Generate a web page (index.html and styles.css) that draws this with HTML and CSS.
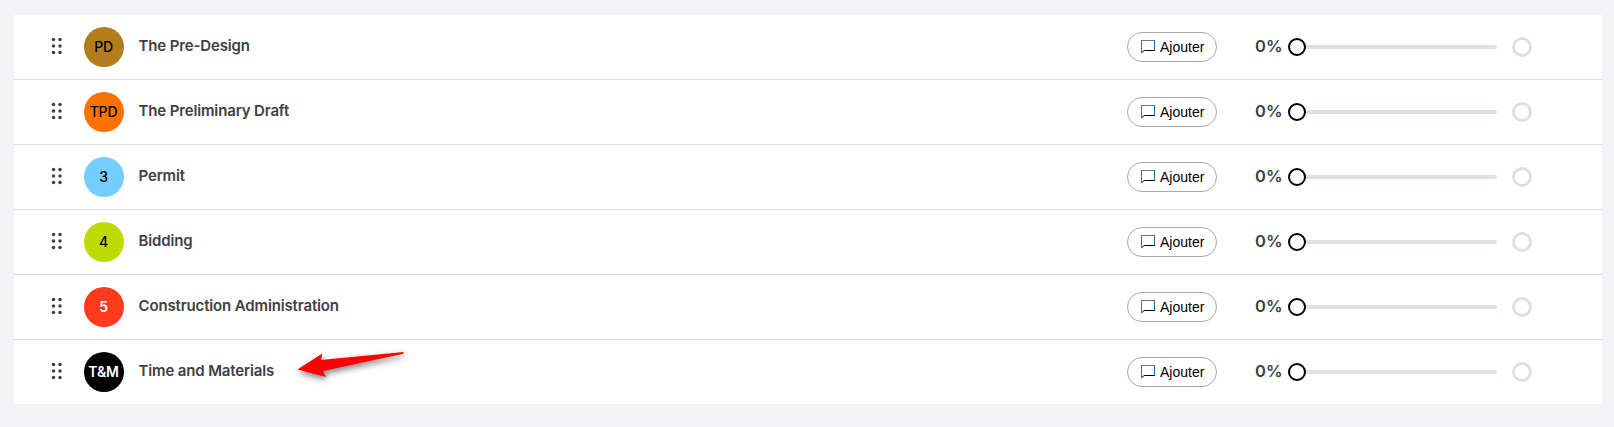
FILE: index.html
```html
<!DOCTYPE html>
<html lang="fr">

<head>
    <meta charset="UTF-8">
    <meta name="viewport" content="width=device-width, initial-scale=1.0">
    <title>Phases</title>
    <link rel="stylesheet" href="styles.css">
</head>

<body>
    <!-- Shared icons -->
    <svg class="sprite" width="0" height="0">
        <symbol id="grip" viewBox="0 0 12 18">
            <circle cx="2.5" cy="2.6" r="1.75" />
            <circle cx="9" cy="2.6" r="1.75" />
            <circle cx="2.5" cy="9" r="1.75" />
            <circle cx="9" cy="9" r="1.75" />
            <circle cx="2.5" cy="15.4" r="1.75" />
            <circle cx="9" cy="15.4" r="1.75" />
        </symbol>
        <symbol id="comment" viewBox="0 0 14 14">
            <path class="comment-top" d="M0 .5H14" />
            <path class="comment-left" d="M.5 0V12.6" />
            <path class="comment-right" d="M13.5 0V11" />
            <path class="comment-bottom" d="M.5 12.8L3.2 10.5H13.5" />
        </symbol>
    </svg>

    <ul class="phases">
        <li class="phase">
            <svg class="grip"><use href="#grip" /></svg>
            <span class="badge brown">PD</span>
            <span class="name">The Pre-Design</span>
            <button class="btn"><svg class="comment"><use href="#comment" /></svg>Ajouter</button>
            <span class="percent">0%</span>
            <div class="slider"><span class="handle"></span><span class="track"></span></div>
            <span class="status"></span>
        </li>
        <li class="phase">
            <svg class="grip"><use href="#grip" /></svg>
            <span class="badge orange">TPD</span>
            <span class="name">The Preliminary Draft</span>
            <button class="btn"><svg class="comment"><use href="#comment" /></svg>Ajouter</button>
            <span class="percent">0%</span>
            <div class="slider"><span class="handle"></span><span class="track"></span></div>
            <span class="status"></span>
        </li>
        <li class="phase">
            <svg class="grip"><use href="#grip" /></svg>
            <span class="badge blue">3</span>
            <span class="name">Permit</span>
            <button class="btn"><svg class="comment"><use href="#comment" /></svg>Ajouter</button>
            <span class="percent">0%</span>
            <div class="slider"><span class="handle"></span><span class="track"></span></div>
            <span class="status"></span>
        </li>
        <li class="phase">
            <svg class="grip"><use href="#grip" /></svg>
            <span class="badge lime">4</span>
            <span class="name">Bidding</span>
            <button class="btn"><svg class="comment"><use href="#comment" /></svg>Ajouter</button>
            <span class="percent">0%</span>
            <div class="slider"><span class="handle"></span><span class="track"></span></div>
            <span class="status"></span>
        </li>
        <li class="phase">
            <svg class="grip"><use href="#grip" /></svg>
            <span class="badge red">5</span>
            <span class="name">Construction Administration</span>
            <button class="btn"><svg class="comment"><use href="#comment" /></svg>Ajouter</button>
            <span class="percent">0%</span>
            <div class="slider"><span class="handle"></span><span class="track"></span></div>
            <span class="status"></span>
        </li>
        <li class="phase">
            <svg class="grip"><use href="#grip" /></svg>
            <span class="badge black">T&amp;M</span>
            <span class="name">Time and Materials</span>
            <button class="btn"><svg class="comment"><use href="#comment" /></svg>Ajouter</button>
            <span class="percent">0%</span>
            <div class="slider"><span class="handle"></span><span class="track"></span></div>
            <span class="status"></span>
        </li>
    </ul>

    <svg class="arrow" viewBox="0 0 140 60">
        <path d="M17.5 34.5L42.3 18.5L41 25L123.5 17L123.5 18.8L43 36L46 42Z" />
    </svg>
</body>

</html>
```

FILE: styles.css
```css
* {
    margin: 0;
    padding: 0;
    box-sizing: border-box;
}

body {
    font-family: Inter, 'Liberation Sans', sans-serif;
    background-color: #f4f4f7;
    color: #414042;
    padding: 15px 12px 0 14px;
    height: 100vh;
    overflow: hidden;
}

.sprite {
    position: absolute;
}

.phases {
    list-style: none;
    background-color: white;
}

.phase {
    display: flex;
    align-items: center;
    height: 65px;
    padding: 0 70px 0 37px;
    border-bottom: 1px solid #dddee1;
}

.phase:last-child {
    height: 64px;
    border-bottom: none;
}

.grip {
    width: 12px;
    height: 18px;
    margin: 0 21px 2px 0;
    fill: #414042;
}

.badge {
    width: 40px;
    height: 40px;
    padding-right: 1px;
    border-radius: 50%;
    line-height: 40px;
    text-align: center;
    font-size: 14px;
    font-weight: 500;
    letter-spacing: -0.2px;
    color: black;
}

.brown {
    background-color: #b37d1e;
}

.orange {
    background-color: #ff7200;
}

.blue {
    background-color: #74ccff;
}

.lime {
    background-color: #bddb00;
}

.red {
    background-color: #ff3a1d;
    color: white;
    font-weight: 600;
}

.black {
    background-color: black;
    color: white;
    font-weight: 600;
}

.name {
    flex: 1;
    margin: 0 0 2px 14.5px;
    font-size: 15px;
    font-weight: 600;
    letter-spacing: -0.14px;
    line-height: 20px;
}

.btn {
    display: flex;
    align-items: center;
    width: 90px;
    height: 30px;
    padding-left: 13px;
    border: 1px solid #a8a8a8;
    border-radius: 15px;
    background-color: white;
    color: black;
    font-family: 'Liberation Sans', Arial, sans-serif;
    font-size: 14px;
}

.comment {
    width: 14px;
    height: 14px;
    margin-right: 5px;
    fill: none;
}

.comment-top {
    stroke: #777;
}

.comment-left {
    stroke: #8a6236;
}

.comment-right {
    stroke: #1d6c9c;
}

.comment-bottom {
    stroke: black;
}

.percent {
    width: 33px;
    margin: 0 0 2px 38px;
    font-size: 16.5px;
    font-weight: 600;
    line-height: 20px;
}

.slider {
    display: flex;
    align-items: center;
    width: 209px;
}

.handle {
    width: 18px;
    height: 18px;
    border: 2px solid black;
    border-radius: 50%;
    background-color: white;
}

.track {
    flex: 1;
    height: 4px;
    border-radius: 0 2px 2px 0;
    background-color: #dde1e5;
}

.status {
    width: 20px;
    height: 20px;
    margin-left: 15px;
    border: 3px solid #e0e0e4;
    border-radius: 50%;
}

/* Pointer over the last phase */
.arrow {
    position: absolute;
    left: 280px;
    top: 335px;
    width: 140px;
    height: 60px;
    fill: red;
    filter: drop-shadow(1px 3px 3px rgba(0, 0, 0, 0.5));
}
```
